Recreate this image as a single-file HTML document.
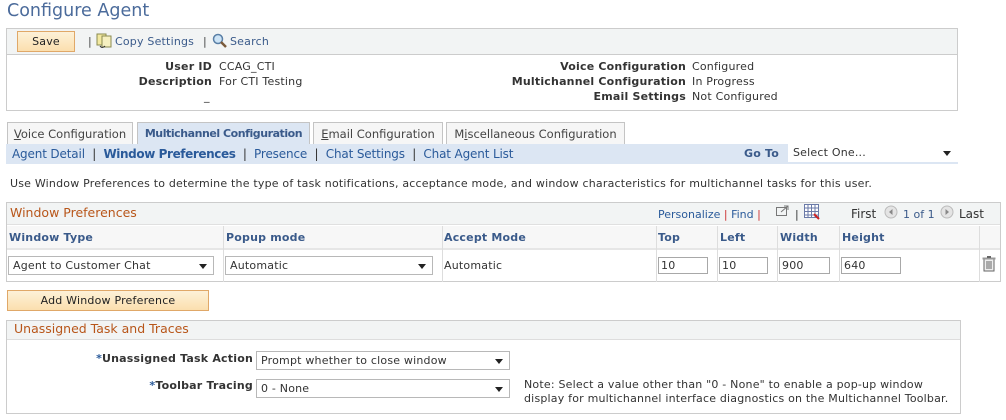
<!DOCTYPE html>
<html><head><style>
*{box-sizing:border-box;margin:0;padding:0}
body{width:1006px;height:420px;background:#fff;font-family:"DejaVu Sans",Verdana,sans-serif;font-size:11px;color:#333;position:relative;overflow:hidden;letter-spacing:0.2px}
.a{position:absolute;white-space:nowrap}
.b{font-weight:bold}
.hd{color:#3a5a8a;font-weight:bold}
.sel{position:absolute;background:#fff;border:1px solid #b8b8b8;height:19px;padding:2px 4px;white-space:nowrap}
.sel:after{content:"";position:absolute;right:6px;top:7px;border-left:4px solid transparent;border-right:4px solid transparent;border-top:5px solid #222}
.inp{position:absolute;background:#fff;border:1px solid #a8a8a8;height:17px;padding:1px 2px}
.btn{position:absolute;background:linear-gradient(#fdf1d8,#fbdfae);border:1px solid #e0a868;text-align:center;color:#222}
.tab{position:absolute;top:122px;height:23px;border:1px solid #c4c4c4;border-bottom:none;background:#f6f6f6;padding:4px 0 0 0;font-size:11.5px;color:#444;white-space:nowrap;text-align:center;letter-spacing:0;overflow:hidden}
.vl{position:absolute;width:1px;background:#ddd}
</style></head><body>
<div class="a" style="left:7px;top:1px;font-size:17.5px;color:#4b6b9b;letter-spacing:0">Configure Agent</div>

<div class="a" style="left:6px;top:28px;width:952px;height:83px;border:1px solid #ccc"></div>
<div class="a" style="left:7px;top:29px;width:950px;height:26px;background:#f2f4f4;border-bottom:1px solid #ccc"></div>
<div class="btn" style="left:17px;top:31px;width:58px;height:21px;padding-top:3px">Save</div>
<div class="a" style="left:88px;top:35px;color:#444">|</div>
<svg class="a" style="left:96px;top:33px" width="17" height="16"><rect x="1" y="1" width="9" height="11" fill="#f3e9a0" stroke="#8a8a50"/><rect x="6" y="3" width="9" height="11" fill="#f6f0c0" stroke="#8a8a50"/><path d="M4 13 q2 3 5 0" stroke="#333" fill="none"/></svg>
<div class="a" style="left:115px;top:35px;color:#3a5a8a">Copy Settings</div>
<div class="a" style="left:203px;top:35px;color:#444">|</div>
<svg class="a" style="left:212px;top:33px" width="16" height="16"><circle cx="6" cy="6" r="4.5" fill="#cde4f6" stroke="#5a7fa6" stroke-width="1.5"/><path d="M9 9 L14 14" stroke="#7a5a3a" stroke-width="2.5"/></svg>
<div class="a" style="left:230px;top:35px;color:#3a5a8a">Search</div>

<div class="a b" style="right:794px;top:60px">User ID</div>
<div class="a" style="left:219px;top:60px">CCAG_CTI</div>
<div class="a b" style="right:794px;top:75px">Description</div>
<div class="a" style="left:219px;top:75px">For CTI Testing</div>
<div class="a" style="left:204px;top:90px">_</div>
<div class="a b" style="right:320px;top:60px">Voice Configuration</div>
<div class="a" style="left:692px;top:60px">Configured</div>
<div class="a b" style="right:320px;top:75px">Multichannel Configuration</div>
<div class="a" style="left:692px;top:75px">In Progress</div>
<div class="a b" style="right:320px;top:90px">Email Settings</div>
<div class="a" style="left:692px;top:90px">Not Configured</div>

<div class="tab" style="left:7px;width:126px"><u>V</u>oice Configuration</div>
<div class="tab" style="left:137px;width:173px;background:#dce6f3;font-weight:bold;color:#3a5a8a;letter-spacing:-0.45px;font-size:11px">Multichannel Configuration</div>
<div class="tab" style="left:313px;width:130px"><u>E</u>mail Configuration</div>
<div class="tab" style="left:446px;width:179px">M<u>i</u>scellaneous Configuration</div>
<div class="a" style="left:6px;top:144px;width:952px;height:20px;background:#dce6f3"></div>
<div class="a" style="left:12px;top:147px;font-size:12px;color:#2a5a9a;letter-spacing:-0.15px">Agent Detail &nbsp;<span style="color:#333">|</span>&nbsp; <b style="letter-spacing:-0.4px">Window Preferences</b> &nbsp;<span style="color:#333">|</span>&nbsp; Presence &nbsp;<span style="color:#333">|</span>&nbsp; Chat Settings &nbsp;<span style="color:#333">|</span>&nbsp; Chat Agent List</div>
<div class="a hd" style="left:744px;top:147px">Go To</div>
<div class="sel" style="left:788px;top:143px;width:170px;border-color:#fff">Select One...</div>

<div class="a" style="left:10px;top:177px">Use Window Preferences to determine the type of task notifications, acceptance mode, and window characteristics for multichannel tasks for this user.</div>

<div class="a" style="left:6px;top:202px;width:995px;height:80px;border:1px solid #ccc"></div>
<div class="a" style="left:7px;top:203px;width:993px;height:22px;background:#f2f4f4;border-bottom:1px solid #e0e0e0"></div>
<div class="a" style="left:10px;top:205px;font-size:12.5px;color:#b8561a;letter-spacing:0">Window Preferences</div>
<div class="a" style="left:658px;top:208px;color:#2a5a9a;letter-spacing:0">Personalize <span style="color:#c33">|</span> Find <span style="color:#c33">|</span></div>
<svg class="a" style="left:776px;top:205px" width="14" height="12"><rect x="0.5" y="2.5" width="10" height="8" fill="none" stroke="#777"/><path d="M5 7 L12 1 M8 1 h4 v4" stroke="#777" fill="none"/></svg>
<div class="a" style="left:795px;top:208px;color:#333">|</div>
<svg class="a" style="left:804px;top:204px" width="16" height="16"><rect x="0.5" y="0.5" width="14" height="13" fill="#fff" stroke="#6a7aa8"/><path d="M0 4 H15 M0 7.5 H15 M0 11 H15 M4 0 V14 M7.5 0 V14 M11 0 V14" stroke="#6a7aa8"/><path d="M10 10 L15 15" stroke="#c22" stroke-width="2"/></svg>
<div class="a" style="left:851px;top:207px;font-size:12px;letter-spacing:0">First</div>
<svg class="a" style="left:884px;top:205px" width="14" height="14"><circle cx="7" cy="7" r="6" fill="#e4e4e4" stroke="#bbb"/><path d="M8.5 4 L5 7 L8.5 10Z" fill="#888"/></svg>
<div class="a" style="left:903px;top:208px;color:#3a5a8a;letter-spacing:0">1 of 1</div>
<svg class="a" style="left:940px;top:205px" width="14" height="14"><circle cx="7" cy="7" r="6" fill="#e4e4e4" stroke="#bbb"/><path d="M5.5 4 L9 7 L5.5 10Z" fill="#888"/></svg>
<div class="a" style="left:959px;top:207px;font-size:12px;letter-spacing:0">Last</div>

<div class="a" style="left:7px;top:226px;width:993px;height:24px;background:#f7f7f7;border-bottom:2px solid #e6e6e6"></div>
<div class="vl" style="left:223px;top:226px;height:56px"></div>
<div class="vl" style="left:442px;top:226px;height:56px"></div>
<div class="vl" style="left:656px;top:226px;height:56px"></div>
<div class="vl" style="left:717px;top:226px;height:56px"></div>
<div class="vl" style="left:777px;top:226px;height:56px"></div>
<div class="vl" style="left:839px;top:226px;height:56px"></div>
<div class="vl" style="left:979px;top:226px;height:56px"></div>
<div class="a hd" style="left:9px;top:231px">Window Type</div>
<div class="a hd" style="left:226px;top:231px">Popup mode</div>
<div class="a hd" style="left:444px;top:231px">Accept Mode</div>
<div class="a hd" style="left:658px;top:231px">Top</div>
<div class="a hd" style="left:720px;top:231px">Left</div>
<div class="a hd" style="left:780px;top:231px">Width</div>
<div class="a hd" style="left:842px;top:231px">Height</div>
<div class="sel" style="left:8px;top:256px;width:206px">Agent to Customer Chat</div>
<div class="sel" style="left:225px;top:256px;width:208px">Automatic</div>
<div class="a" style="left:444px;top:259px">Automatic</div>
<div class="inp" style="left:658px;top:257px;width:50px">10</div>
<div class="inp" style="left:719px;top:257px;width:49px">10</div>
<div class="inp" style="left:779px;top:257px;width:51px">900</div>
<div class="inp" style="left:841px;top:257px;width:60px">640</div>
<svg class="a" style="left:982px;top:256px" width="14" height="16"><rect x="2" y="3" width="10" height="12" fill="#eee" stroke="#666"/><rect x="0.5" y="1.5" width="13" height="2" fill="#999"/><rect x="5" y="0" width="4" height="2" fill="#666"/><path d="M5 5 V13 M7 5 V13 M9 5 V13" stroke="#666"/></svg>

<div class="btn" style="left:7px;top:290px;width:202px;height:21px;padding-top:3px">Add Window Preference</div>

<div class="a" style="left:6px;top:320px;width:955px;height:94px;border:1px solid #ccc"></div>
<div class="a" style="left:7px;top:321px;width:953px;height:19px;background:#f2f4f4;border-bottom:1px solid #ddd"></div>
<div class="a" style="left:14px;top:321px;font-size:12.5px;color:#b8561a;letter-spacing:0">Unassigned Task and Traces</div>
<div class="a b" style="right:753px;top:352px"><span style="color:#2a5a9a">*</span>Unassigned Task Action</div>
<div class="sel" style="left:256px;top:351px;width:254px">Prompt whether to close window</div>
<div class="a b" style="right:753px;top:379px"><span style="color:#2a5a9a">*</span>Toolbar Tracing</div>
<div class="sel" style="left:256px;top:379px;width:254px">0 - None</div>
<div class="a" style="left:524px;top:378px;line-height:14px">Note: Select a value other than "0 - None" to enable a pop-up window<br>display for multichannel interface diagnostics on the Multichannel Toolbar.</div>
</body></html>
